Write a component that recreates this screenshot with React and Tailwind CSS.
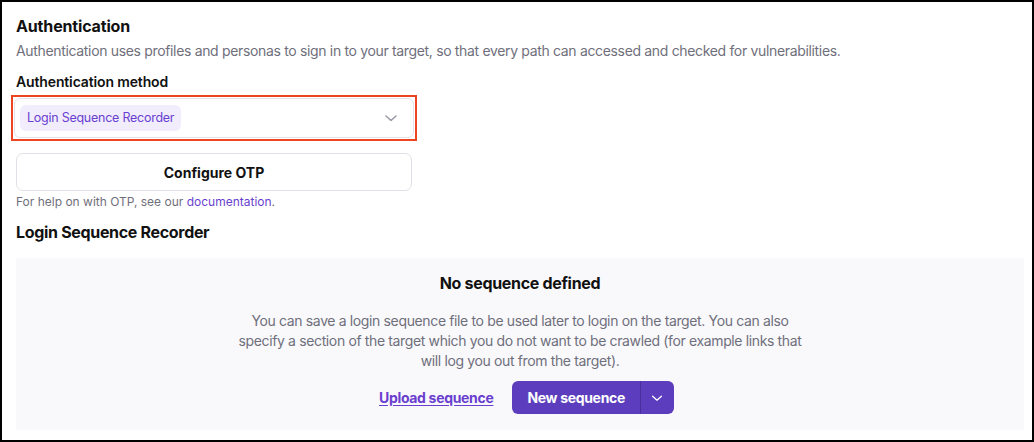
import React from "react";

function Chevron({ className }) {
  return (
    <svg viewBox="0 0 16 16" className={className} fill="none" stroke="currentColor" strokeWidth="1.5" strokeLinecap="round" strokeLinejoin="round">
      <path d="M3 6l5 4.5L13 6" />
    </svg>
  );
}

export default function App() {
  return (
    <div
      className="w-[1034px] h-[442px] border-2 border-black bg-white px-[14px] overflow-hidden"
      style={{ fontFamily: "Inter, 'Noto Sans', sans-serif" }}
    >
      <h1 className="pt-[13px] text-[16px] leading-[22px] font-bold text-[#111] tracking-[-0.01em]">Authentication</h1>
      <p className="mt-[3px] text-[14px] leading-[22px] text-[#6f6f7b] tracking-[-0.024em]">
        Authentication uses profiles and personas to sign in to your target, so that every path can accessed and checked for vulnerabilities.
      </p>
      <div className="mt-[11px] text-[14px] leading-[18px] font-semibold text-[#111] tracking-[-0.01em]">Authentication method</div>
      <div className="mt-[4px] ml-[-5px] w-[406px] border-2 border-[#ee4422] p-[1px]">
        <div className="h-[40px] rounded-[6px] border border-[#e3e3e8] bg-white flex items-center justify-between pl-[5px] pr-[14px]">
          <span className="rounded-[6px] bg-[#f1edfd] px-[7px] h-[26px] flex items-center text-[12.5px] text-[#6a3fcf] tracking-[-0.02em]">
            Login Sequence Recorder
          </span>
          <Chevron className="w-[16px] h-[16px] text-[#9a9aa6]" />
        </div>
      </div>
      <button className="mt-[12px] w-[396px] h-[38px] rounded-[7px] border border-[#e0e0e6] bg-white text-[14px] font-bold text-[#111]">
        Configure OTP
      </button>
      <p className="mt-[2px] text-[12px] leading-[18px] text-[#6f6f7b]">
        For help on with OTP, see our <span className="text-[#6a3fcf]">documentation</span>.
      </p>
      <h2 className="mt-[11px] text-[16px] leading-[20px] font-bold text-[#111] tracking-[-0.02em]">Login Sequence Recorder</h2>
      <div className="mt-[16px] w-[1008px] h-[172px] bg-[#f9f9fb] flex flex-col items-center">
        <div className="mt-[14px] text-[16px] leading-[22px] font-bold text-[#111] tracking-[-0.02em]">No sequence defined</div>
        <p className="mt-[17px] w-[580px] text-center text-[14px] leading-[20px] text-[#6f6f7b] tracking-[-0.026em]">
          You can save a login sequence file to be used later to login on the target. You can also specify a section of the target which you do not want to be crawled (for example links that will log you out from the target).
        </p>
        <div className="mt-[10px] ml-[13px] flex items-center gap-[19px] tracking-[-0.02em]">
          <a className="text-[14px] font-bold text-[#6a3fcf] underline underline-offset-2">Upload sequence</a>
          <div className="flex h-[33px] rounded-[6px] bg-[#5b3dbd] text-white overflow-hidden">
            <span className="flex items-center px-[15px] text-[14px] font-bold">New sequence</span>
            <span className="w-px bg-[#4a2e9e]" />
            <span className="flex items-center justify-center w-[33px]">
              <Chevron className="w-[14px] h-[14px]" />
            </span>
          </div>
        </div>
      </div>
    </div>
  );
}
